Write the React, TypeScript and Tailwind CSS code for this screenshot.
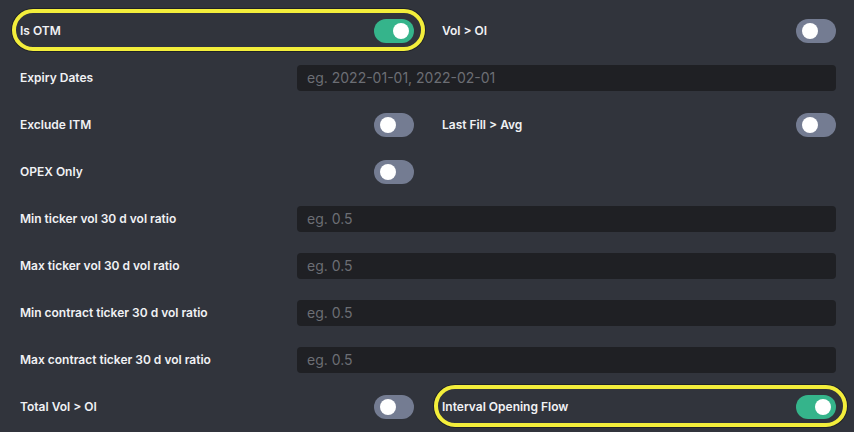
import React from 'react';

type Cell =
  | { kind: 'toggle'; label: string; on?: boolean; mark?: boolean }
  | { kind: 'empty' };

type Row =
  | { kind: 'pair'; left: Cell; right: Cell }
  | { kind: 'input'; label: string; placeholder: string };

const rows: Row[] = [
  { kind: 'pair', left: { kind: 'toggle', label: 'Is OTM', on: true, mark: true }, right: { kind: 'toggle', label: 'Vol > OI' } },
  { kind: 'input', label: 'Expiry Dates', placeholder: 'eg. 2022-01-01, 2022-02-01' },
  { kind: 'pair', left: { kind: 'toggle', label: 'Exclude ITM' }, right: { kind: 'toggle', label: 'Last Fill > Avg' } },
  { kind: 'pair', left: { kind: 'toggle', label: 'OPEX Only' }, right: { kind: 'empty' } },
  { kind: 'input', label: 'Min ticker vol 30 d vol ratio', placeholder: 'eg. 0.5' },
  { kind: 'input', label: 'Max ticker vol 30 d vol ratio', placeholder: 'eg. 0.5' },
  { kind: 'input', label: 'Min contract ticker 30 d vol ratio', placeholder: 'eg. 0.5' },
  { kind: 'input', label: 'Max contract ticker 30 d vol ratio', placeholder: 'eg. 0.5' },
  { kind: 'pair', left: { kind: 'toggle', label: 'Total Vol > OI' }, right: { kind: 'toggle', label: 'Interval Opening Flow', on: true, mark: true } },
];

const Toggle = ({ on }: { on?: boolean }) => (
  <div className={`relative w-[40px] h-[24px] rounded-full shrink-0 ${on ? 'bg-[#35b48b]' : 'bg-[#747c92]'}`}>
    <div className={`absolute top-[4px] w-[16px] h-[16px] rounded-full bg-white ${on ? 'right-[5px]' : 'left-[6px]'}`} />
  </div>
);

const ToggleCell = ({ cell }: { cell: Cell }) => {
  if (cell.kind === 'empty') return <div className="w-[394px]" />;
  return (
    <div className="relative w-[394px] h-full flex items-center justify-between">
      {cell.mark && (
        // yellow annotation ring drawn over the row
        <div className="absolute left-[-8px] right-[-11px] top-[2px] bottom-[3px] rounded-full border-[4px] border-[#f3ee3b] shadow-[0_0_0_1px_rgba(0,0,0,0.35)]" />
      )}
      <span className="text-[12px] font-semibold text-[#f0f1f4]">{cell.label}</span>
      <Toggle on={cell.on} />
    </div>
  );
};

export default function App() {
  return (
    <div
      className="w-[854px] h-[432px] bg-[#31343c] pl-[20px] pr-[18px] pt-[7px] overflow-hidden"
      style={{ fontFamily: 'Inter, "Noto Sans", sans-serif' }}
    >
      {rows.map((row, i) =>
        row.kind === 'pair' ? (
          <div key={i} className="h-[47px] flex gap-[28px]">
            <ToggleCell cell={row.left} />
            <ToggleCell cell={row.right} />
          </div>
        ) : (
          <div key={i} className="h-[47px] flex items-center">
            <span className="w-[277px] text-[12px] font-semibold text-[#f0f1f4]">{row.label}</span>
            <div className="flex-1 h-[26px] rounded-[4px] bg-[#1f2024] flex items-center px-[10px]">
              <span className="text-[14px] text-[#6c6e74]">{row.placeholder}</span>
            </div>
          </div>
        )
      )}
    </div>
  );
}
